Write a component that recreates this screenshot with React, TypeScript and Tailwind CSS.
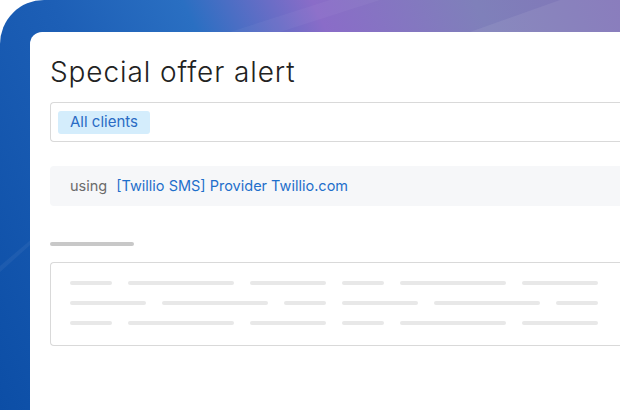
import React from "react";

const rowA = [42, 106, 76, 42, 106, 76];
const rowB = [76, 106, 42, 76, 106, 42];

function SkeletonRow({ widths }: { widths: number[] }) {
  return (
    <div className="flex gap-4">
      {widths.map((w, i) => (
        <div key={i} className="h-[4px] rounded-full bg-[#e8e8e8]" style={{ width: w }} />
      ))}
    </div>
  );
}

export default function App() {
  return (
    <div className="h-[410px] w-[620px] overflow-hidden bg-white">
      <div className="relative flex h-full w-full rounded-tl-[44px] bg-[linear-gradient(65deg,#0c4ea6_0%,#1d5fb6_30%,#2a6fc2_46%,#8a6cc8_62%,#7f80ba_82%,#8274b8_100%)] pl-[30px] pt-[32px]">
        {/* light streaks */}
        <svg className="pointer-events-none absolute inset-0" width="620" height="410">
          <path d="M0 266 L40 232 L40 236 L0 272 Z" fill="#ffffff" opacity="0.05" />
          <path d="M470 32 L560 0 L620 0 L620 32 Z" fill="#ffffff" opacity="0.07" />
          <path d="M230 32 L330 0 L380 0 L280 32 Z" fill="#ffffff" opacity="0.04" />
        </svg>
        <div className="relative flex-1 rounded-tl-[12px] bg-white pl-[20px] pt-[20px] font-['Inter',sans-serif]">
          <h1 className="h-[40px] text-[28px] font-light leading-[40px] tracking-[0.9px] text-[#222]">
            Special offer alert
          </h1>
          <div className="mt-[10px] flex h-[40px] items-center rounded-l-[4px] border border-r-0 border-[#d9d9d9] pl-[7px]">
            <span className="flex h-[23px] items-center rounded-[3px] bg-[#d4edfc] px-[12px] text-[15px] text-[#2a6bc4]">
              All clients
            </span>
          </div>
          <div className="mt-[24px] flex h-[40px] items-center rounded-l-[4px] bg-[#f6f7f9] pl-[20px] text-[14.5px]">
            <span className="text-[#6b6b6b]">using</span>
            <span className="ml-[9px] text-[#1f6fcb]">[Twillio SMS] Provider Twillio.com</span>
          </div>
          <div className="mt-[36px] h-[4px] w-[84px] rounded-full bg-[#c8c8c8]" />
          <div className="mt-[16px] flex h-[84px] flex-col gap-[16px] rounded-l-[4px] border border-r-0 border-[#d9d9d9] pl-[19px] pt-[18px]">
            <SkeletonRow widths={rowA} />
            <SkeletonRow widths={rowB} />
            <SkeletonRow widths={rowA} />
          </div>
        </div>
      </div>
    </div>
  );
}
